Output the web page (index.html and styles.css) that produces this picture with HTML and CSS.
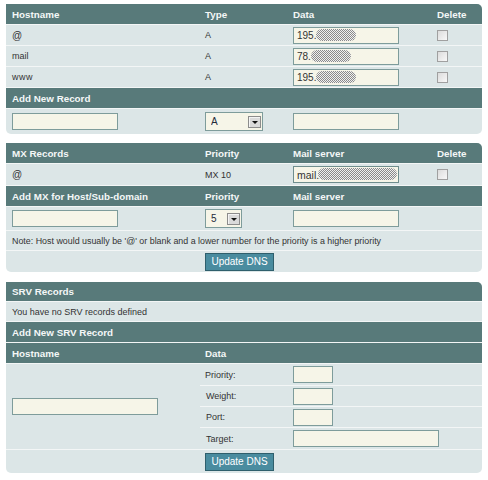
FILE: index.html
```html
<!DOCTYPE html>
<html>
<head>
<meta charset="utf-8">
<link rel="stylesheet" href="styles.css">
</head>
<body>
<div class="page">

<section class="panel">
<table class="grid">
<colgroup><col class="c1"><col class="c2"><col class="c3"><col class="c4"></colgroup>
<tr class="r20"><th>Hostname</th><th>Type</th><th>Data</th><th>Delete</th></tr>
<tr class="r20"><td class="at">@</td><td>A</td><td><span class="field"><input class="inp w106" value="195."><span class="redact rd1"></span></span></td><td><input type="checkbox" class="chk"></td></tr>
<tr class="r20"><td>mail</td><td>A</td><td><span class="field"><input class="inp w106" value="78."><span class="redact rd2"></span></span></td><td><input type="checkbox" class="chk"></td></tr>
<tr class="r20"><td class="www">www</td><td>A</td><td><span class="field"><input class="inp w106" value="195."><span class="redact rd1"></span></span></td><td><input type="checkbox" class="chk"></td></tr>
<tr class="r20"><th colspan="4">Add New Record</th></tr>
<tr class="r25 last"><td><input class="inp w106"></td><td><span class="select w58"><select class="sel"><option>A</option></select><span class="sel-btn"></span></span></td><td><input class="inp w106"></td><td></td></tr>
</table>
</section>

<section class="panel">
<table class="grid">
<colgroup><col class="c1"><col class="c2"><col class="c3"><col class="c4"></colgroup>
<tr class="r20"><th>MX Records</th><th>Priority</th><th>Mail server</th><th>Delete</th></tr>
<tr class="r21"><td class="at">@</td><td>MX 10</td><td><span class="field"><input class="inp w106 mx" value="mail."><span class="redact rd3"></span></span></td><td><input type="checkbox" class="chk"></td></tr>
<tr class="r20"><th>Add MX for Host/Sub-domain</th><th>Priority</th><th>Mail server</th><th></th></tr>
<tr class="r23"><td><input class="inp w106"></td><td><span class="select w37"><select class="sel"><option>5</option></select><span class="sel-btn"></span></span></td><td><input class="inp w106"></td><td></td></tr>
<tr class="r19"><td colspan="4" class="note">Note: Host would usually be '@' or blank and a lower number for the priority is a higher priority</td></tr>
<tr class="r21 last"><td></td><td colspan="3"><button class="btn">Update DNS</button></td></tr>
</table>
</section>

<section class="panel p3">
<table class="grid">
<colgroup><col class="c1"><col class="c2"><col class="c3"><col class="c4"></colgroup>
<tr class="r19"><th colspan="4">SRV Records</th></tr>
<tr class="r19"><td colspan="4">You have no SRV records defined</td></tr>
<tr class="r20"><th colspan="4">Add New SRV Record</th></tr>
<tr class="r20"><th>Hostname</th><th colspan="3">Data</th></tr>
<tr class="r21"><td rowspan="4"><input class="inp w146"></td><td>Priority:</td><td colspan="2"><input class="inp w40"></td></tr>
<tr class="r20"><td>Weight:</td><td colspan="2"><input class="inp w40"></td></tr>
<tr class="r20"><td>Port:</td><td colspan="2"><input class="inp w40"></td></tr>
<tr class="r21"><td>Target:</td><td colspan="2"><input class="inp w146"></td></tr>
<tr class="r23 last"><td></td><td colspan="3"><button class="btn">Update DNS</button></td></tr>
</table>
</section>

</div>
</body>
</html>
```

FILE: styles.css
```css
body {
  margin: 0;
  background: #ffffff;
  font-family: "Liberation Sans", Arial, sans-serif;
  font-size: 9px;
  color: #333333;
}

.page {
  display: flex;
  flex-direction: column;
  gap: 9px;
  padding: 4px 0 0 6px;
}

.panel {
  width: 476px;
  background: #dce6e7;
  border-radius: 0 5px 5px 5px;
  overflow: hidden;
}

.p3 {
  margin-top: 1px;
}

.grid {
  width: 100%;
  border-collapse: separate;
  border-spacing: 0;
  table-layout: fixed;
}

col.c1 { width: 194px; }
col.c2 { width: 88px; }
col.c3 { width: 144px; }
col.c4 { width: 50px; }

th, td {
  padding: 0 0 0 5px;
  text-align: left;
  vertical-align: middle;
  border-bottom: 1px solid #f3f6f6;
  white-space: nowrap;
}

th:first-child, td:first-child {
  padding-left: 6px;
}

th {
  background: #587a7a;
  color: #f4f7f7;
  font-weight: bold;
  font-size: 9.8px;
}

.r19 > th, .r19 > td { height: 19px; }
.r20 > th, .r20 > td { height: 20px; }
.r21 > th, .r21 > td { height: 21px; }
.r23 > th, .r23 > td { height: 23px; }
.r25 > th, .r25 > td { height: 25px; }

.last > td, .last > th {
  border-bottom: 0;
}

.at {
  font-size: 10px;
}

.www {
  letter-spacing: 0.5px;
}

.note {
  font-size: 8.9px;
}

.field {
  position: relative;
  display: inline-block;
  vertical-align: middle;
}

.inp {
  box-sizing: border-box;
  height: 17px;
  margin: 0;
  padding: 0 0 0 3px;
  border: 1px solid #7e9c9b;
  background: #f6f5e8;
  font-family: "Liberation Sans", Arial, sans-serif;
  font-size: 10px;
  color: #333333;
  vertical-align: middle;
  outline: none;
}

.inp.mx {
  border-color: #6f8e8e;
  font-size: 10.5px;
}

.w106 { width: 106px; }
.w146 { width: 146px; }
.w40 { width: 40px; }

.redact {
  position: absolute;
  top: 2px;
  height: 12px;
  border-radius: 6px;
  background-color: #e0e0e0;
  background-image: repeating-conic-gradient(#8a8a8a 0 25%, #f0f0f0 0 50%);
  background-size: 2px 2px;
}

.rd1 { left: 23px; width: 40px; }
.rd2 { left: 18px; width: 40px; }
.rd3 { left: 25px; width: 79px; top: 2px; }

.chk {
  appearance: none;
  -webkit-appearance: none;
  box-sizing: border-box;
  width: 11px;
  height: 11px;
  margin: 0;
  border: 1px solid #a0a0a0;
  background: linear-gradient(135deg, #dcdcdc, #f8f8f8);
  vertical-align: middle;
}

.select {
  position: relative;
  display: inline-block;
  vertical-align: middle;
}

.sel {
  appearance: none;
  -webkit-appearance: none;
  box-sizing: border-box;
  height: 19px;
  margin: 0;
  padding: 0 0 0 5px;
  border: 1px solid #7e9c9b;
  background: #f6f5e8;
  font-family: "Liberation Sans", Arial, sans-serif;
  font-size: 10px;
  color: #1f2a3a;
  outline: none;
}

.w58 .sel { width: 58px; }
.w37 .sel { width: 37px; }

.sel-btn {
  position: absolute;
  right: 2px;
  top: 4px;
  box-sizing: border-box;
  width: 13px;
  height: 12px;
  border: 1px solid #8c8c8c;
  background: #dadada;
  box-shadow: inset 1px 1px 0 #f4f4f4;
}

.sel-btn::after {
  content: "";
  position: absolute;
  left: 3px;
  top: 4px;
  border-left: 3px solid transparent;
  border-right: 3px solid transparent;
  border-top: 3px solid #111111;
}

.btn {
  box-sizing: border-box;
  width: 69px;
  height: 18px;
  margin: 0;
  padding: 0;
  border: 1px solid #2f5f6c;
  background: #4a8c9f;
  color: #ffffff;
  font-family: "Liberation Sans", Arial, sans-serif;
  font-size: 10px;
  vertical-align: middle;
}
```
